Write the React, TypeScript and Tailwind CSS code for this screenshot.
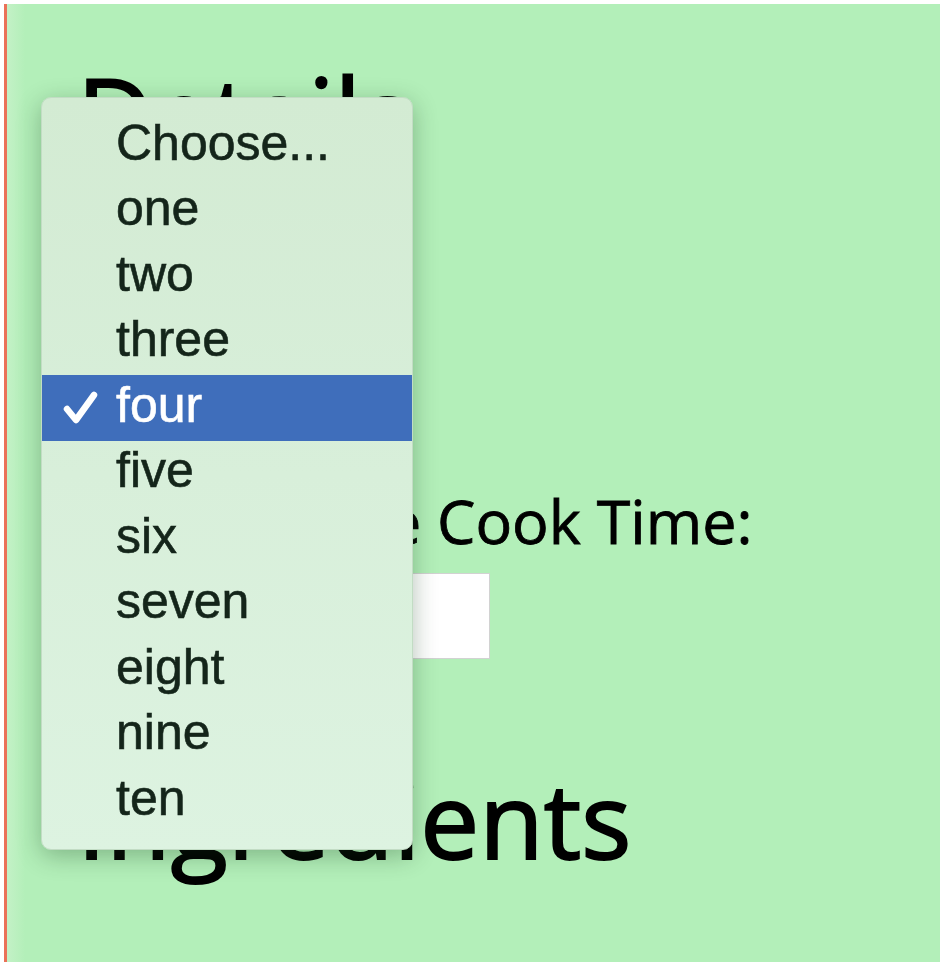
const options = ["Choose...", "one", "two", "three", "four", "five", "six", "seven", "eight", "nine", "ten"]

const selected = "four"

const CheckMark = () => (
  <svg width="36" height="36" viewBox="0 0 36 36" fill="none">
    <path d="M5 19 L14 30 L32 5" stroke="white" strokeWidth="6.5" strokeLinecap="round" strokeLinejoin="round" />
  </svg>
)

const OptionMenu = () => (
  <div className="absolute left-[34px] top-[93px] w-[372px] pt-[15px] pb-[15px] rounded-[10px] bg-gradient-to-b from-[#d3ebd3] to-[#ddf3e1] border border-[#c2dcc4] shadow-[0_6px_24px_rgba(20,60,25,0.32)] font-['Liberation_Sans',Arial,sans-serif] text-[50px]">
    {options.map((opt) => {
      const isSel = opt === selected
      return (
        <div
          key={opt}
          className={
            isSel
              ? "flex items-center h-[65.5px] bg-[#3f6ebb] text-white"
              : "flex items-center h-[65.5px] text-[#14251a]"
          }
        >
          <span className="flex w-[74px] pl-[20px]">{isSel && <CheckMark />}</span>
          <span className="leading-none pb-[6px] [-webkit-text-stroke:0.6px_currentColor]">{opt}</span>
        </div>
      )
    })}
  </div>
)

export default function App() {
  return (
    <div className="w-[945px] h-[968px] bg-white pt-[4px] pl-[4px] pr-[5px] pb-[6px]">
      <div className="relative flex h-full border-l-[3px] border-[#ea7158] bg-[#b3efb9] overflow-hidden">
        <div className="w-[18px] h-full bg-gradient-to-r from-[#c3f1c6] to-[#b3efb9]" />
        <div className="flex flex-col pl-[52px] font-['Open_Sans',sans-serif] text-black">
          <h1 className="mt-[57px] text-[105px] leading-none [-webkit-text-stroke:2px_black]">Details</h1>

          <label className="mt-[86px] text-[60px] leading-none">Servings:</label>
          <div className="mt-[64px] w-[300px] h-[64px] bg-white border border-[#c8c8c8]" />

          <label className="mt-[50px] text-[61px] leading-none whitespace-nowrap [-webkit-text-stroke:0.8px_black]">
            <span className="tracking-[-0.04em]">Approximat</span>e Cook Time:
          </label>
          <div className="mt-[22px] w-[413px] h-[86px] border border-[#d2d2d2] bg-gradient-to-r from-[#ece6ea] via-white to-white" />

          <h2 className="mt-[107px] text-[105px] leading-none [-webkit-text-stroke:2px_black]">Ingredients</h2>
        </div>

        <OptionMenu />
      </div>
    </div>
  )
}
